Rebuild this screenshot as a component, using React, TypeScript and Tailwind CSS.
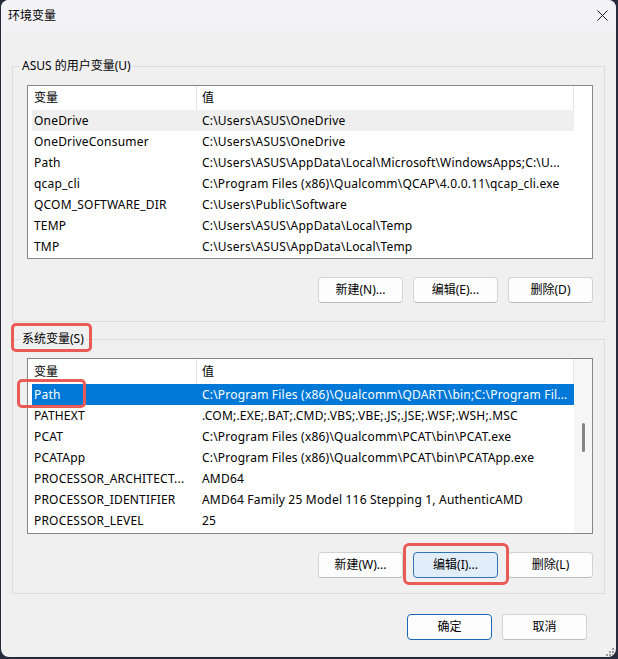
import React from 'react';

type Row = { name: string; value: string; state?: 'hover' | 'selected' };

const userVars: Row[] = [
  { name: 'OneDrive', value: 'C:\\Users\\ASUS\\OneDrive', state: 'hover' },
  { name: 'OneDriveConsumer', value: 'C:\\Users\\ASUS\\OneDrive' },
  { name: 'Path', value: 'C:\\Users\\ASUS\\AppData\\Local\\Microsoft\\WindowsApps;C:\\U...' },
  { name: 'qcap_cli', value: 'C:\\Program Files (x86)\\Qualcomm\\QCAP\\4.0.0.11\\qcap_cli.exe' },
  { name: 'QCOM_SOFTWARE_DIR', value: 'C:\\Users\\Public\\Software' },
  { name: 'TEMP', value: 'C:\\Users\\ASUS\\AppData\\Local\\Temp' },
  { name: 'TMP', value: 'C:\\Users\\ASUS\\AppData\\Local\\Temp' },
];

const systemVars: Row[] = [
  { name: 'Path', value: 'C:\\Program Files (x86)\\Qualcomm\\QDART\\\\bin;C:\\Program Fil...', state: 'selected' },
  { name: 'PATHEXT', value: '.COM;.EXE;.BAT;.CMD;.VBS;.VBE;.JS;.JSE;.WSF;.WSH;.MSC' },
  { name: 'PCAT', value: 'C:\\Program Files (x86)\\Qualcomm\\PCAT\\bin\\PCAT.exe' },
  { name: 'PCATApp', value: 'C:\\Program Files (x86)\\Qualcomm\\PCAT\\bin\\PCATApp.exe' },
  { name: 'PROCESSOR_ARCHITECT...', value: 'AMD64' },
  { name: 'PROCESSOR_IDENTIFIER', value: 'AMD64 Family 25 Model 116 Stepping 1, AuthenticAMD' },
  { name: 'PROCESSOR_LEVEL', value: '25' },
];

function VarRow({ row }: { row: Row }) {
  const tone =
    row.state === 'selected'
      ? 'bg-[#0078d7] text-white'
      : row.state === 'hover'
        ? 'bg-[#efefef]'
        : '';
  return (
    <div className={`flex h-[21px] items-center whitespace-nowrap tracking-[0.2px] ${tone}`}>
      <div className="w-[165px] shrink-0 overflow-hidden pl-[2px]">{row.name}</div>
      <div className="min-w-0 flex-1 overflow-hidden pl-[5px]">{row.value}</div>
    </div>
  );
}

function VarList({ rows, tall, scrollbar }: { rows: Row[]; tall?: boolean; scrollbar?: boolean }) {
  return (
    <div className={`flex border border-[#868686] bg-white ${tall ? 'h-[176px]' : 'h-[174px]'}`}>
      <div className="flex min-w-0 flex-1 flex-col">
        {/* header */}
        <div className={`flex shrink-0 ${tall ? 'h-[25px]' : 'h-[24px]'}`}>
          <div className="flex w-[169px] items-center border-r border-[#e5e5e5] pl-[6px]">变量</div>
          <div className="flex flex-1 items-center border-r border-[#e5e5e5] pl-[5px]">值</div>
        </div>
        <div className="flex flex-col pl-[4px]">
          {rows.map((r) => (
            <VarRow key={r.name} row={r} />
          ))}
        </div>
      </div>
      <div className={`flex w-[18px] shrink-0 flex-col items-center ${scrollbar ? 'bg-[#f6f6f6] pt-[64px]' : ''}`}>
        {scrollbar && <div className="h-[29px] w-[3px] rounded-full bg-[#858585]" />}
      </div>
    </div>
  );
}

function Btn({ children, kind = 'normal' }: { children: React.ReactNode; kind?: 'normal' | 'active' | 'default' }) {
  const look =
    kind === 'active'
      ? 'bg-[#e1edf8] border-[#2f73b6]'
      : kind === 'default'
        ? 'bg-[#fdfdfd] border-[#1a68b8]'
        : 'bg-[#fdfdfd] border-[#d3d3d3] border-b-[#bcbcbc]';
  return (
    <button className={`flex h-[26px] w-[85px] items-center justify-center rounded-[4px] border ${look}`}>
      {children}
    </button>
  );
}

export default function App() {
  return (
    <div className="min-h-screen bg-[#262b3b] font-['Noto_Sans','Noto_Sans_CJK_SC',sans-serif] text-[12px] text-black">
      <div className="relative ml-[1px] flex h-[657px] w-[615px] flex-col overflow-hidden rounded-[8px] bg-[#f0f0f0]">
        {/* title bar */}
        <div className="flex h-[31px] shrink-0 items-center justify-between bg-[#f3f2f7] pl-[7px] pr-[8px]">
          <span>环境变量</span>
          <svg width="11" height="11" viewBox="0 0 11 11" className="mb-[1px]">
            <path d="M0.5 0.5 L10.5 10.5 M10.5 0.5 L0.5 10.5" stroke="#1a1a1a" strokeWidth="1" fill="none" />
          </svg>
        </div>

        <div className="flex flex-col px-[11px]">
          <fieldset className="mt-[27px] min-w-0 border border-[#dcdcdc] pb-[18px] pl-[14px] pr-[11px] pt-[11px]">
            <legend className="-ml-[7px] px-[2px] leading-[16px]">ASUS 的用户变量(U)</legend>
            <VarList rows={userVars} />
            <div className="mt-[18px] flex justify-end gap-[10px]">
              <Btn>新建(N)...</Btn>
              <Btn>编辑(E)...</Btn>
              <Btn>删除(D)</Btn>
            </div>
          </fieldset>

          <fieldset className="mt-[9px] min-w-0 border border-[#dcdcdc] pb-[15px] pl-[14px] pr-[11px] pt-[11px]">
            <legend className="-ml-[7px] px-[2px] leading-[16px]">系统变量(S)</legend>
            <VarList rows={systemVars} tall scrollbar />
            <div className="mt-[18px] flex justify-end gap-[10px]">
              <Btn>新建(W)...</Btn>
              <Btn kind="active">编辑(I)...</Btn>
              <Btn>删除(L)</Btn>
            </div>
          </fieldset>

          <div className="mt-[20px] flex justify-end gap-[10px] pr-[18px]">
            <div className="h-[27px]">
              <Btn kind="default">确定</Btn>
            </div>
            <Btn>取消</Btn>
          </div>
        </div>

        {/* resize grip */}
        <svg width="8" height="8" viewBox="0 0 8 8" className="absolute bottom-[1px] right-[2px]">
          <g fill="#9a9a9a">
            <rect x="6" y="0" width="2" height="2" />
            <rect x="3" y="3" width="2" height="2" />
            <rect x="6" y="3" width="2" height="2" />
            <rect x="0" y="6" width="2" height="2" />
            <rect x="3" y="6" width="2" height="2" />
            <rect x="6" y="6" width="2" height="2" />
          </g>
        </svg>

        {/* red annotation marks */}
        <div className="pointer-events-none absolute left-[10px] top-[323px] h-[29px] w-[81px] rounded-[5px] border-[3px] border-[#ea5a56]" />
        <div className="pointer-events-none absolute left-[16px] top-[379px] h-[29px] w-[69px] rounded-[5px] border-[3px] border-[#ea5a56]" />
        <div className="pointer-events-none absolute left-[402px] top-[543px] h-[42px] w-[106px] rounded-[6px] border-[3px] border-[#ea5a56]" />
      </div>
    </div>
  );
}
